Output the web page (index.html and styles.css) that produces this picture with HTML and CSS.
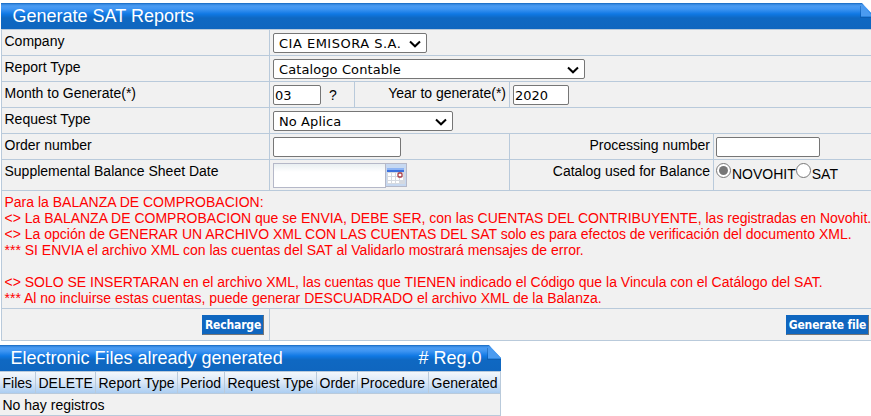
FILE: index.html
```html
<!DOCTYPE html>
<html lang="en">
<head>
    <meta charset="UTF-8">
    <title>Generate SAT Reports</title>
    <link rel="stylesheet" href="styles.css">
</head>
<body>
    <form class="report">
        <div class="title">
            <span>Generate SAT Reports</span>
            <svg class="fold" width="14" height="18" viewBox="0 0 14 18">
                <path d="M3 0H14V12Z" fill="#fff"/>
                <path d="M2 1L14 13V13.500H2Z" fill="#4b9bf0"/>
                <path d="M1.500 3V14.500H14" fill="none" stroke="#0a4c94" stroke-opacity=".4"/>
            </svg>
        </div>
        <div class="row">
            <div class="cell label">Company</div>
            <div class="cell rest">
                <select class="company"><option>CIA EMISORA S.A.</option></select>
            </div>
        </div>
        <div class="row">
            <div class="cell label">Report Type</div>
            <div class="cell rest">
                <select class="type"><option>Catalogo Contable</option></select>
            </div>
        </div>
        <div class="row">
            <div class="cell label">Month to Generate(*)</div>
            <div class="cell month">
                <input type="text" class="text w48" value="03"><span class="help">?</span>
            </div>
            <div class="cell year">Year to generate(*)</div>
            <div class="cell rest"><input type="text" class="text w56" value="2020"></div>
        </div>
        <div class="row">
            <div class="cell label">Request Type</div>
            <div class="cell rest">
                <select class="request"><option>No Aplica</option></select>
            </div>
        </div>
        <div class="row">
            <div class="cell label">Order number</div>
            <div class="cell middle"><input type="text" class="text w128"></div>
            <div class="cell right">Processing number</div>
            <div class="cell rest last"><input type="text" class="text w104"></div>
        </div>
        <div class="row date-row">
            <div class="cell label">Supplemental Balance Sheet Date</div>
            <div class="cell middle">
                <input type="text" class="date"><span class="trigger">
                    <svg width="18" height="18" viewBox="0 0 18 18">
                        <rect x="0" y="2" width="18" height="15" fill="#d5d9e0"/>
                        <path d="M1 6h3v3H1zM5 6h3v3H5zM9 6h3v3H9zM13 6h3v3h-3zM1 10h3v3H1zM5 10h3v3H5zM9 10h3v3H9zM13 10h3v3h-3zM1 14h3v2H1zM5 14h3v2H5zM9 14h3v2H9z" fill="#fff"/>
                        <rect x="0" y="1" width="17" height="2" fill="#8db4f4"/>
                        <rect x="0" y="3" width="17" height="2" fill="#3d71de"/>
                        <rect x="11" y="6" width="4" height="4" rx="1" fill="#fff" stroke="#a83842" stroke-width="1.3"/>
                    </svg>
                </span>
            </div>
            <div class="cell right">Catalog used for Balance</div>
            <div class="cell rest last radios">
                <input type="radio" name="catalog" checked><span>NOVOHIT</span><input type="radio" name="catalog"><span>SAT</span>
            </div>
        </div>
        <div class="notes">
            <p>Para la BALANZA DE COMPROBACION:</p>
            <p>&lt;&gt; La BALANZA DE COMPROBACION que se ENVIA, DEBE SER, con las CUENTAS DEL CONTRIBUYENTE, las registradas en Novohit.</p>
            <p>&lt;&gt; La opción de GENERAR UN ARCHIVO XML CON LAS CUENTAS DEL SAT solo es para efectos de verificación del documento XML.</p>
            <p>*** SI ENVIA el archivo XML con las cuentas del SAT al Validarlo mostrará mensajes de error.</p>
            <p>&nbsp;</p>
            <p>&lt;&gt; SOLO SE INSERTARAN en el archivo XML, las cuentas que TIENEN indicado el Código que la Vincula con el Catálogo del SAT.</p>
            <p>*** Al no incluirse estas cuentas, puede generar DESCUADRADO el archivo XML de la Balanza.</p>
        </div>
        <div class="row buttons">
            <div class="cell label"><button type="button" class="recharge">Recharge</button></div>
            <div class="cell rest"><button type="button" class="generate">Generate file</button></div>
        </div>
    </form>

    <div class="files">
        <div class="title">
            <span>Electronic Files already generated</span>
            <span># Reg.0</span>
            <svg class="fold" width="14" height="18" viewBox="0 0 14 18">
                <path d="M2 0H14V13Z" fill="#fff"/>
                <path d="M1 1L14 13V13.500H1Z" fill="#4b9bf0"/>
                <path d="M.5 3V14.500H14" fill="none" stroke="#0a4c94" stroke-opacity=".4"/>
            </svg>
        </div>
        <div class="head">
            <span>Files</span>
            <span>DELETE</span>
            <span>Report Type</span>
            <span>Period</span>
            <span>Request Type</span>
            <span>Order</span>
            <span>Procedure</span>
            <span>Generated</span>
        </div>
        <div class="empty">No hay registros</div>
    </div>
</body>
</html>
```

FILE: styles.css
```css
* {
    box-sizing: border-box;
}
body {
    margin: 0;
    padding-top: 3px;
    height: 416px;
    overflow: hidden;
    background: #fff;
    color: #000;
    font: 14px/16px "Liberation Sans", Arial, sans-serif;
}
.report {
    margin-left: 1px;
    border-left: 1px solid #b9cadb;
}
.title {
    position: relative;
    display: flex;
    justify-content: space-between;
    height: 27px;
    margin-left: -1px;
    padding-left: 11.5px;
    border-bottom: 1px solid #b9cadb;
    background: linear-gradient(#0f62b8 0, #3184dd 1px, #4a9cf3 3px, #3f95f2 6px, #0f78e4 11px, #0f68c2 15px, #0f66bf 26px);
    color: #fff;
    font-size: 18px;
    line-height: 27px;
}
.fold {
    position: absolute;
    top: 0;
    right: 0;
}
.report .fold {
    right: -2px;
}
.row {
    display: flex;
    height: 26px;
    border-bottom: 1px solid #b9cadb;
    background: #f1f1f1;
}
.cell {
    display: flex;
    flex: none;
    padding: 3px 3px 0;
    border-left: 1px solid #b9cadb;
}
.label {
    width: 267px;
    padding-left: 2.5px;
    border-left: 0;
}
.rest {
    flex: 1;
}
.last {
    padding-left: 2px;
}
.month {
    width: 85px;
}
.year {
    width: 155px;
    justify-content: flex-end;
}
.middle {
    width: 240px;
}
.right {
    width: 204px;
    justify-content: flex-end;
}
select {
    appearance: none;
    height: 20px;
    padding: 0 0 0 5px;
    border: 1px solid #767676;
    border-radius: 2px;
    background: #fff url("data:image/svg+xml,%3Csvg xmlns='http://www.w3.org/2000/svg' width='12' height='8'%3E%3Cpath d='M1 1.500L6 6.300L11 1.500' fill='none' stroke='%23000' stroke-width='2'/%3E%3C/svg%3E") no-repeat right 5px top 6px;
    color: #000;
    font: 13px "DejaVu Sans", Verdana, sans-serif;
}
.company {
    width: 154px;
    letter-spacing: .5px;
}
.type {
    width: 312px;
    letter-spacing: .1px;
}
.request {
    width: 180px;
    letter-spacing: .1px;
}
.text {
    height: 20px;
    padding: 1px;
    border: 1px solid #767676;
    border-radius: 2px;
    font: 13px "DejaVu Sans", Verdana, sans-serif;
}
.w48 {
    width: 48px;
}
.w56 {
    width: 56px;
}
.w104 {
    width: 104px;
}
.w128 {
    width: 128px;
}
.help {
    margin-left: 8px;
    padding-top: 2px;
}
.date-row {
    height: 31px;
}
.date {
    width: 113px;
    height: 25px;
    border: 1px solid #b5b8c8;
    background: linear-gradient(#e9eff1, #fff 8px);
}
.trigger {
    display: block;
    width: 21px;
    height: 24px;
    padding: 3px 1px;
    border: 1px solid #b5b8c8;
    border-left: 0;
    background: #c6d8f1;
}
.trigger svg {
    display: block;
}
.radios input {
    width: 15px;
    height: 15px;
    margin: 0 1px 0 0;
    accent-color: #767676;
}
.radios span {
    padding-top: 3px;
}
.notes {
    height: 118px;
    padding: 3px 2.5px;
    border-bottom: 1px solid #b9cadb;
    background: #f1f1f1;
    color: #f00;
    white-space: nowrap;
}
.notes p {
    margin: 0;
}
.buttons {
    height: 32px;
}
.buttons .cell {
    justify-content: flex-end;
    padding-top: 6px;
}
button {
    height: 20px;
    padding: 0;
    border: 1px solid #0f66bf;
    border-right-color: #767676;
    border-bottom-color: #767676;
    background: #0f66bf;
    color: #fff;
    font: bold 12px "DejaVu Sans Condensed", Tahoma, sans-serif;
    letter-spacing: -.15px;
    white-space: nowrap;
}
.recharge {
    width: 62px;
    margin-right: 2px;
}
.generate {
    width: 83px;
    margin-right: -1px;
}
.files {
    width: 501px;
    margin-top: 4px;
}
.files .title {
    margin-left: 0;
    padding: 0 19.5px 0 10.5px;
}
.head {
    display: grid;
    grid-template-columns: 36px 60px 82px 47px 92px 41px 71px 72px;
    height: 22px;
    border-bottom: 1px solid #b9cadb;
    background: linear-gradient(#f3f7fc, #d9e7f7 50%, #abcdf1);
}
.head span {
    padding: 3px 0 0 2.5px;
    border-right: 1px solid #b9cadb;
    white-space: nowrap;
}
.empty {
    height: 22px;
    padding: 3px 2.5px 0;
    border-right: 1px solid #b9cadb;
    border-bottom: 1px solid #b9cadb;
    background: #f1f1f1;
}
```
